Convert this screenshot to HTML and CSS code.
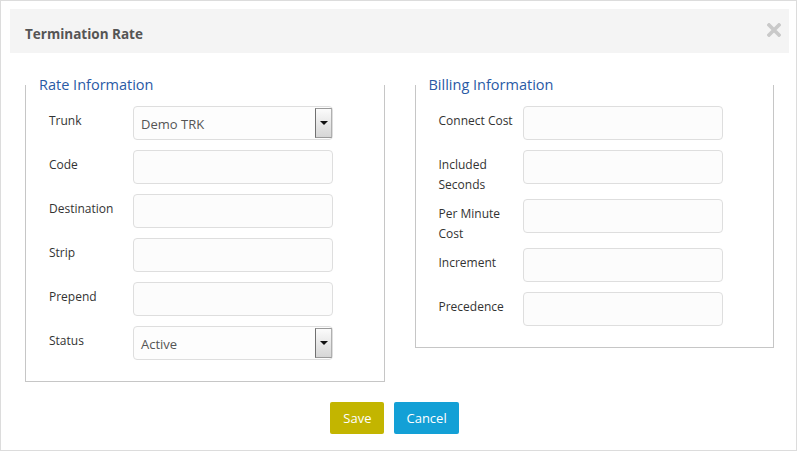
FILE: index.html
```html
<!DOCTYPE html>
<html lang="en">
<head>
<meta charset="utf-8">
<title>Termination Rate</title>
<link rel="stylesheet" href="styles.css">
</head>
<body>
<div class="modal">
  <div class="modal-header">
    <h4 class="modal-title">Termination Rate</h4>
    <span class="close" aria-label="Close">
      <svg width="14" height="14" viewBox="0 0 14 14"><path d="M2 2 L12 12 M12 2 L2 12" stroke="#c9c9c9" stroke-width="3.6" stroke-linecap="square" fill="none"/></svg>
    </span>
  </div>
  <div class="modal-body">
    <div class="columns">
      <section class="group">
        <div class="legend">Rate Information</div>
        <div class="row">
          <label class="label">Trunk</label>
          <div class="control select"><span class="value">Demo TRK</span><span class="arrow"><span class="tri"></span></span></div>
        </div>
        <div class="row">
          <label class="label">Code</label>
          <div class="control"></div>
        </div>
        <div class="row">
          <label class="label">Destination</label>
          <div class="control"></div>
        </div>
        <div class="row">
          <label class="label">Strip</label>
          <div class="control"></div>
        </div>
        <div class="row">
          <label class="label">Prepend</label>
          <div class="control"></div>
        </div>
        <div class="row">
          <label class="label">Status</label>
          <div class="control select"><span class="value">Active</span><span class="arrow"><span class="tri"></span></span></div>
        </div>
      </section>
      <section class="group">
        <div class="legend">Billing Information</div>
        <div class="row">
          <label class="label">Connect Cost</label>
          <div class="control"></div>
        </div>
        <div class="row">
          <label class="label">Included Seconds</label>
          <div class="control"></div>
        </div>
        <div class="row">
          <label class="label">Per Minute Cost</label>
          <div class="control"></div>
        </div>
        <div class="row">
          <label class="label">Increment</label>
          <div class="control"></div>
        </div>
        <div class="row">
          <label class="label">Precedence</label>
          <div class="control"></div>
        </div>
      </section>
    </div>
    <div class="footer">
      <button class="btn btn-save">Save</button>
      <button class="btn btn-cancel">Cancel</button>
    </div>
  </div>
</div>
</body>
</html>
```
FILE: styles.css
```css
* { box-sizing: border-box; }
html, body { margin: 0; padding: 0; background: #fff; }
body { font-family: "Open Sans", "Liberation Sans", sans-serif; color: #333; }

.modal {
  width: 797px;
  height: 451px;
  border: 1px solid #dcdcdc;
  padding: 8px 7px 0 9px;
  background: #fff;
}

.modal-header {
  height: 44px;
  background: #f4f4f4;
  padding: 15px 8px 0 15px;
  display: flex;
  justify-content: space-between;
  align-items: flex-start;
}
.modal-title {
  margin: 0;
  font-size: 13.5px;
  font-weight: 700;
  line-height: 20px;
  color: #555;
}
.close { display: block; width: 14px; height: 14px; margin-top: -1px; }
.close svg { display: block; }

.columns {
  display: grid;
  grid-template-columns: 1fr 1fr;
  column-gap: 30px;
  padding: 0 15px;
  margin-top: 32px;
  align-items: start;
}

.group {
  border: 1px solid #c6c6c6;
  border-top: none;
  padding: 0 0 11px 0;
}
.legend {
  margin: -10px 0 11px 0;
  padding-left: 13px;
  font-size: 14.5px;
  line-height: 20px;
  color: #2a5aa5;
  background: #fff;
}

.row { display: flex; align-items: flex-start; }
.label {
  flex: 0 0 107px;
  padding: 5px 0 4px 23px;
  font-size: 12px;
  line-height: 20px;
  color: #333;
}
.control {
  width: 200px;
  height: 34px;
  margin-bottom: 10px;
  border: 1px solid #dedede;
  border-radius: 4px;
  background: #fcfcfc;
}
.select {
  display: flex;
  align-items: stretch;
  background: #fdfdfd;
}
.select .value {
  flex: 1;
  padding-left: 7px;
  font-size: 13px;
  line-height: 34px;
  color: #555;
}
.arrow {
  width: 17px;
  margin: 1px 0;
  border: 1px solid #9a9a9a;
  border-left-color: #707070;
  border-right-color: #b0b0b0;
  background: linear-gradient(#fbfbfb, #d6d6d6);
  display: flex;
  align-items: center;
  justify-content: center;
}
.tri {
  width: 0; height: 0;
  border-left: 4px solid transparent;
  border-right: 4px solid transparent;
  border-top: 4px solid #111;
}

.footer {
  display: flex;
  justify-content: center;
  gap: 10px;
  padding-right: 10px;
  margin-top: 20px;
}
.btn {
  height: 32px;
  padding: 0 13px;
  border: none;
  border-radius: 2px;
  font-family: "Open Sans", "Liberation Sans", sans-serif;
  font-size: 13px;
  color: #fff;
  line-height: 32px;
}
.btn-save { background: #c3b500; }
.btn-cancel { background: #13a0d6; padding: 0 12px; }
```
